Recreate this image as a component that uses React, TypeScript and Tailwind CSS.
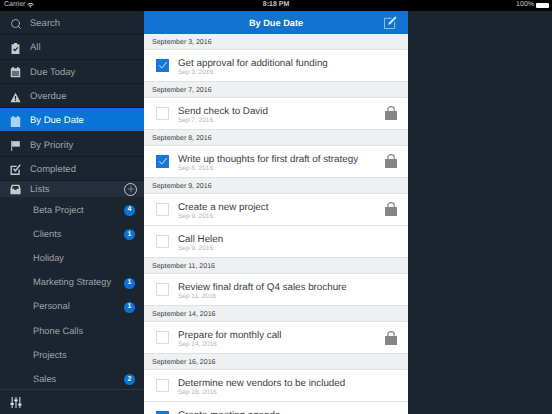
import { Plus, Search } from "lucide-react";
import type { ReactNode } from "react";

const font = "font-['Liberation_Sans','Noto_Sans',sans-serif] [text-rendering:geometricPrecision]";

type IconProps = { className?: string };

function CheckClipIcon({ className }: IconProps) {
  return (
    <svg viewBox="0 0 14 14" className={className} fill="currentColor">
      <path d="M5 0h4v1.500h3V14H2V1.500h3z" />
      <path d="M4.300 7.500l2 2 3.600-4" fill="none" stroke="#1b2530" strokeWidth="1.600" />
    </svg>
  );
}

function CalendarIcon({ className }: IconProps) {
  return (
    <svg viewBox="0 0 14 14" className={className} fill="currentColor">
      <path d="M3 0h2v1.500h4V0h2v1.500h2V13H1V1.500h2z" />
      <path d="M2.500 5h9v6.500h-9z" fill="#1b2530" fillOpacity="0.55" />
    </svg>
  );
}

function ActiveCalendarIcon({ className }: IconProps) {
  return (
    <svg viewBox="0 0 14 14" className={className} fill="currentColor">
      <path d="M3 0h2v1.500h4V0h2v1.500h2V14H1V1.500h2z" />
    </svg>
  );
}

function WarningIcon({ className }: IconProps) {
  return (
    <svg viewBox="0 0 14 14" className={className} fill="currentColor">
      <path d="M7 1l6.500 12H.5z" />
      <path d="M6.300 5h1.400v4.200H6.300zM6.300 10h1.400v1.400H6.300z" fill="#1b2530" />
    </svg>
  );
}

function FlagIcon({ className }: IconProps) {
  return (
    <svg viewBox="0 0 14 14" className={className} fill="currentColor">
      <path d="M1.500 1h1.200v13H1.500z" />
      <path d="M2.700 1.500H12.500v7H2.700z" />
    </svg>
  );
}

function CompletedIcon({ className }: IconProps) {
  return (
    <svg viewBox="0 0 14 14" className={className} fill="none" stroke="currentColor">
      <path d="M11.500 7v6h-10V3h7" strokeWidth="1.700" />
      <path d="M4.500 6l2.300 2.800L13 1" strokeWidth="1.800" />
    </svg>
  );
}

function InboxIcon({ className }: IconProps) {
  return (
    <svg viewBox="0 0 14 14" className={className} fill="currentColor">
      <path d="M2 1h10l1.500 5.500V13H.5V6.500z" />
      <path d="M3.500 2.500h7l.8 3.500H9L8 7.500H6L5 6H2.700z" fill="#232f3c" />
    </svg>
  );
}

function LockIcon({ className }: IconProps) {
  return (
    <svg viewBox="0 0 12 14" className={className} fill="currentColor">
      <path d="M0 5h12v9H0z" />
      <path d="M2.800 6V3.200a3.200 2.600 0 0 1 6.400 0V6" fill="none" stroke="currentColor" strokeWidth="1.200" />
    </svg>
  );
}

function ComposeIcon({ className }: IconProps) {
  return (
    <svg viewBox="0 0 14 14" className={className} fill="none">
      <path d="M8 2.500H.5v11h11V6" stroke="#9cc7ee" strokeWidth="1" />
      <path d="M4.500 9.500l.6-2.300L12 .5l1.500 1.500-6.800 6.900z" fill="#d5e7f8" />
    </svg>
  );
}

function SlidersIcon({ className }: IconProps) {
  return (
    <svg viewBox="0 0 14 14" className={className} fill="none" stroke="currentColor">
      <path d="M2.500 0.500v13M7 0.500v13M11.500 0.500v13" strokeWidth="1.200" />
      <path d="M0.500 8.500h4M5 4.500h4M9.500 9.500h4" strokeWidth="2" />
    </svg>
  );
}

function WifiIcon({ className }: IconProps) {
  return (
    <svg viewBox="0 0 12 9" className={className} fill="currentColor">
      <path d="M6 0C3.700 0 1.700.9 0 2.400l1.100 1.200C2.400 2.400 4.100 1.600 6 1.600s3.600.8 4.900 2L12 2.400C10.300.9 8.300 0 6 0z" />
      <path d="M6 3C4.600 3 3.300 3.500 2.200 4.500l1.100 1.200C4 5 5 4.600 6 4.600s2 .4 2.700 1.100l1.100-1.200C8.700 3.500 7.400 3 6 3z" />
      <path d="M4.300 6.600L6 8.500l1.700-1.900C7.200 6.200 6.600 6 6 6s-1.200.2-1.700.6z" />
    </svg>
  );
}

function MainNavRow({ label, icon, active }: { label: string; icon: ReactNode; active?: boolean }) {
  return (
    <div
      className={`flex h-[24.300px] shrink-0 items-center border-b border-[#141c24] pl-[10px] pt-[3px] text-[9.500px] ${
        active ? "bg-[#0a74d6] text-white" : "text-[#9ea3a8]"
      }`}
    >
      <span className={`flex w-[20px] shrink-0 ${active ? "text-[#a9d3f6]" : "text-[#c5c9cc]"}`}>{icon}</span>
      {label}
    </div>
  );
}

function ListRow({ label, count }: { label: string; count?: number }) {
  return (
    <div className="flex h-[24.200px] shrink-0 items-center pl-[33px] pr-[9px] pt-[3px] text-[9.300px] text-[#9ea3a8]">
      <span className="flex-1 truncate">{label}</span>
      {count != null && (
        <span className="flex h-[11px] w-[11px] items-center justify-center rounded-full bg-[#0a74d6] text-[7px] font-bold text-white">
          {count}
        </span>
      )}
    </div>
  );
}

function Sidebar() {
  const icon = "h-[11px] w-[11px]";
  return (
    <aside className="flex h-full w-[144px] shrink-0 flex-col bg-[#1b2530]">
      <MainNavRow label="Search" icon={<Search className="h-[12px] w-[12px]" strokeWidth={1.500} />} />
      <MainNavRow label="All" icon={<CheckClipIcon className={icon} />} />
      <MainNavRow label="Due Today" icon={<CalendarIcon className={icon} />} />
      <MainNavRow label="Overdue" icon={<WarningIcon className={icon} />} />
      <MainNavRow label="By Due Date" icon={<ActiveCalendarIcon className={icon} />} active />
      <MainNavRow label="By Priority" icon={<FlagIcon className={icon} />} />
      <MainNavRow label="Completed" icon={<CompletedIcon className={icon} />} />
      <div className="flex h-[16px] shrink-0 items-center bg-[#232f3c] pl-[10px] pr-[7px] text-[9.500px] text-[#9ea3a8]">
        <span className="flex w-[20px] shrink-0 text-[#c5c9cc]">
          <InboxIcon className={icon} />
        </span>
        <span className="mt-[2px] flex-1">Lists</span>
        <span className="flex h-[13px] w-[13px] items-center justify-center rounded-full border border-[#c5c9cc] text-[#c5c9cc]">
          <Plus className="h-[10px] w-[10px]" strokeWidth={1.200} />
        </span>
      </div>
      <div className="min-h-0 flex-1 overflow-hidden">
        <ListRow label="Beta Project" count={4} />
        <ListRow label="Clients" count={1} />
        <ListRow label="Holiday" />
        <ListRow label="Marketing Strategy" count={1} />
        <ListRow label="Personal" count={1} />
        <ListRow label="Phone Calls" />
        <ListRow label="Projects" />
        <ListRow label="Sales" count={2} />
      </div>
      <div className="flex h-[25px] shrink-0 items-center border-t border-[#2a3541] pl-[10px] text-[#e2e4e6]">
        <SlidersIcon className="h-[13px] w-[12px]" />
      </div>
    </aside>
  );
}

type Task = { title: string; date: string; checked?: boolean; locked?: boolean };

const GROUPS: { heading: string; tasks: Task[] }[] = [
  { heading: "September 3, 2016", tasks: [{ title: "Get approval for additional funding", date: "Sep 3, 2016", checked: true }] },
  { heading: "September 7, 2016", tasks: [{ title: "Send check to David", date: "Sep 7, 2016", locked: true }] },
  { heading: "September 8, 2016", tasks: [{ title: "Write up thoughts for first draft of strategy", date: "Sep 8, 2016", checked: true, locked: true }] },
  {
    heading: "September 9, 2016",
    tasks: [
      { title: "Create a new project", date: "Sep 9, 2016", locked: true },
      { title: "Call Helen", date: "Sep 9, 2016" },
    ],
  },
  { heading: "September 11, 2016", tasks: [{ title: "Review final draft of Q4 sales brochure", date: "Sep 11, 2016" }] },
  { heading: "September 14, 2016", tasks: [{ title: "Prepare for monthly call", date: "Sep 14, 2016", locked: true }] },
  {
    heading: "September 16, 2016",
    tasks: [
      { title: "Determine new vendors to be included", date: "Sep 16, 2016" },
      { title: "Create meeting agenda", date: "Sep 16, 2016", checked: true },
    ],
  },
];

function TaskRow({ task }: { task: Task }) {
  return (
    <div className="flex h-[32.300px] shrink-0 items-center border-b border-[#dfe1e3] bg-white pl-[12px] pr-[11px]">
      {task.checked ? (
        <span className="flex h-[13px] w-[13px] shrink-0 items-center justify-center bg-[#1479d8]">
          <svg viewBox="0 0 12 12" className="h-[10px] w-[10px]" fill="none" stroke="white" strokeWidth="1">
            <path d="M1.500 6.500l3 3L10.500 2.500" />
          </svg>
        </span>
      ) : (
        <span className="h-[13px] w-[13px] shrink-0 border border-[#dcdcdc]" />
      )}
      <div className="ml-[9px] min-w-0 flex-1 pt-[4px]">
        <div className="truncate text-[9.800px] leading-[11px] text-[#3a3d40]">{task.title}</div>
        <div className="text-[6.500px] leading-[8px] text-[#b0b3b6]">{task.date}</div>
      </div>
      {task.locked && <LockIcon className="h-[14px] w-[12px] shrink-0 text-[#858585]" />}
    </div>
  );
}

function TaskPanel() {
  return (
    <main className="flex h-full w-[264px] shrink-0 flex-col overflow-hidden bg-white">
      <header className="relative flex h-[23px] shrink-0 items-center justify-center bg-[#1173cf] pt-[3px] text-[9.200px] font-bold text-white">
        By Due Date
        <ComposeIcon className="absolute right-[11px] top-[5px] h-[13px] w-[13px]" />
      </header>
      {GROUPS.map((group) => (
        <section key={group.heading} className="shrink-0">
          <div className="flex h-[15.700px] items-center border-b border-[#dfe1e3] bg-[#eff0f2] pl-[8px] pt-[3px] text-[7px] text-[#3a3d40]">
            {group.heading}
          </div>
          {group.tasks.map((task) => (
            <TaskRow key={task.title} task={task} />
          ))}
        </section>
      ))}
    </main>
  );
}

export default function App() {
  return (
    <div className={`flex h-[414px] w-[552px] flex-col overflow-hidden bg-black ${font}`}>
      <div className="relative flex h-[11px] shrink-0 items-center justify-between pl-[4px] pr-[3px] text-[7px] text-[#c9c9c9]">
        <span className="flex items-center gap-[2px]">
          Carrier
          <WifiIcon className="h-[5px] w-[7px]" />
        </span>
        <span className="absolute left-0 right-0 text-center font-bold">8:18 PM</span>
        <span className="flex items-center gap-[2px]">
          100%
          <span className="h-[5px] w-[13px] rounded-[1px] bg-white" />
        </span>
      </div>
      <div className="flex min-h-0 flex-1 bg-[#1b2530]">
        <Sidebar />
        <TaskPanel />
      </div>
    </div>
  );
}
